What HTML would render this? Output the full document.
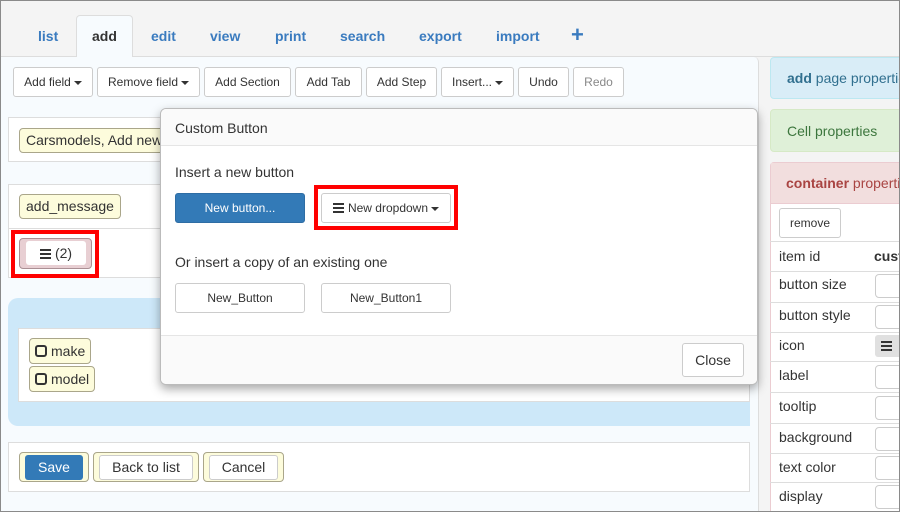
<!DOCTYPE html>
<html><head><meta charset="utf-8"><style>
*{box-sizing:border-box;margin:0;padding:0}
html,body{width:900px;height:512px;overflow:hidden}
body{background:#f4f4f4;font-family:"Liberation Sans",sans-serif;font-size:13px;color:#333;position:relative}
.a{position:absolute}
.frame{left:0;top:0;width:900px;height:512px;border:1px solid #8a8a8a;z-index:50;pointer-events:none}
.tab{top:28px;font-weight:bold;font-size:14px;color:#3a7bbf}
.btn{position:absolute;background:#fff;border:1px solid #ccc;border-radius:3px;font-size:12px;text-align:center;color:#333;white-space:nowrap}
.car{display:inline-block;width:0;height:0;border-left:4px solid transparent;border-right:4px solid transparent;border-top:4px solid #333;vertical-align:middle;margin-left:3px}
.panel{background:#fff;border:1px solid #ddd}
.tag{position:absolute;background:#fdfcdc;border:1px solid #aaa68a;border-radius:4px;font-size:14px;padding:0 6px;line-height:22px;white-space:nowrap}
.ham{display:inline-block;width:11px;height:10px;background:linear-gradient(#333 0 2px,transparent 2px 4px,#333 4px 6px,transparent 6px 8px,#333 8px 10px);vertical-align:-1px;margin-right:4px}
.sq{display:inline-block;width:12px;height:12px;border:2.5px solid #333;border-radius:3px;vertical-align:-1px;margin-right:4px}
.row{position:absolute;left:770px;width:130px;border-top:1px solid #ddd;font-size:14px;padding-left:9px;white-space:nowrap}
.inp{position:absolute;left:875px;width:30px;height:24px;border:1px solid #ccc;border-radius:4px;background:#fff}
</style></head><body>
<div class="a frame"></div>
<div class="a" style="left:0;top:56px;width:900px;height:1px;background:#ddd"></div>
<div class="a" style="left:76px;top:15px;width:57px;height:43px;background:#f7fbfe;border:1px solid #ddd;border-bottom:none;border-radius:4px 4px 0 0"></div>
<div class="a tab" style="left:38px">list</div>
<div class="a tab" style="left:92px;color:#333">add</div>
<div class="a tab" style="left:151px">edit</div>
<div class="a tab" style="left:210px">view</div>
<div class="a tab" style="left:275px">print</div>
<div class="a tab" style="left:340px">search</div>
<div class="a tab" style="left:419px">export</div>
<div class="a tab" style="left:496px">import</div>
<div class="a tab" style="left:571px;top:22px;font-size:22px">+</div>
<div class="a" style="left:0;top:57px;width:759px;height:455px;background:#f7fbfe;border-right:1px solid #ddd;border-radius:0 5px 0 0"></div>
<div class="btn" style="left:13px;top:67px;width:80px;height:30px;line-height:28px">Add field<span class="car"></span></div>
<div class="btn" style="left:97px;top:67px;width:103px;height:30px;line-height:28px">Remove field<span class="car"></span></div>
<div class="btn" style="left:204px;top:67px;width:87px;height:30px;line-height:28px">Add Section</div>
<div class="btn" style="left:295px;top:67px;width:67px;height:30px;line-height:28px">Add Tab</div>
<div class="btn" style="left:366px;top:67px;width:71px;height:30px;line-height:28px">Add Step</div>
<div class="btn" style="left:441px;top:67px;width:73px;height:30px;line-height:28px">Insert...<span class="car"></span></div>
<div class="btn" style="left:518px;top:67px;width:51px;height:30px;line-height:28px">Undo</div>
<div class="btn" style="left:573px;top:67px;width:51px;height:30px;line-height:28px;color:#888">Redo</div>

<div class="a panel" style="left:8px;top:117px;width:742px;height:45px"></div>
<div class="tag" style="left:19px;top:128px;height:25px">Carsmodels, Add new</div>
<div class="a panel" style="left:8px;top:184px;width:742px;height:94px"></div>
<div class="a" style="left:8px;top:228px;width:742px;height:1px;background:#ddd"></div>
<div class="tag" style="left:19px;top:194px;height:25px">add_message</div>
<div class="a" style="left:11px;top:230px;width:88px;height:48px;border:4px solid #f00"></div>
<div class="a" style="left:19px;top:238px;width:73px;height:31px;background:#e8cfd3;border:1px solid #aa8f94;border-radius:4px"></div>
<div class="a" style="left:26px;top:241px;width:60px;height:24px;background:#fff;border-radius:3px;text-align:center;font-size:14px;line-height:24px"><span class="ham"></span>(2)</div>

<div class="a" style="left:8px;top:298px;width:742px;height:128px;background:#cde8f9;border-radius:10px 0 0 10px"></div>
<div class="a" style="left:18px;top:328px;width:732px;height:74px;background:#fff;border:1px solid #ddd"></div>
<div class="tag" style="left:29px;top:338px;height:26px;padding:0 5px;line-height:24px"><span class="sq"></span>make</div>
<div class="tag" style="left:29px;top:366px;height:26px;padding:0 5px;line-height:24px"><span class="sq"></span>model</div>

<div class="a panel" style="left:8px;top:442px;width:742px;height:50px"></div>
<div class="a" style="left:19px;top:452px;width:70px;height:30px;background:#fdfcdc;border:1px solid #aaa68a;border-radius:4px"></div>
<div class="a" style="left:25px;top:455px;width:58px;height:25px;background:#337ab7;border-radius:3px;color:#fff;text-align:center;line-height:25px;font-size:14px">Save</div>
<div class="a" style="left:93px;top:452px;width:106px;height:30px;background:#fdfcdc;border:1px solid #aaa68a;border-radius:4px"></div>
<div class="a" style="left:99px;top:455px;width:94px;height:25px;background:#fff;border:1px solid #ccc;border-radius:3px;text-align:center;line-height:23px;font-size:14px">Back to list</div>
<div class="a" style="left:203px;top:452px;width:81px;height:30px;background:#fdfcdc;border:1px solid #aaa68a;border-radius:4px"></div>
<div class="a" style="left:209px;top:455px;width:69px;height:25px;background:#fff;border:1px solid #ccc;border-radius:3px;text-align:center;line-height:23px;font-size:14px">Cancel</div>

<div class="a" style="left:770px;top:57px;width:140px;height:42px;background:#d9edf7;border:1px solid #bce8f1;border-radius:4px;color:#31708f;font-size:14px;padding:12px 0 0 16px;white-space:nowrap"><b>add</b> page properties</div>
<div class="a" style="left:770px;top:109px;width:140px;height:43px;background:#dff0d8;border:1px solid #d6e9c6;border-radius:4px;color:#3c763d;font-size:14px;padding:13px 0 0 16px;white-space:nowrap">Cell properties</div>
<div class="a" style="left:770px;top:162px;width:140px;height:350px;background:#fff;border:1px solid #ebccd1;border-bottom:none;border-radius:4px 4px 0 0"></div>
<div class="a" style="left:771px;top:163px;width:139px;height:41px;background:#f2dede;border-bottom:1px solid #ebccd1;color:#a94442;font-size:14px;padding:12px 0 0 15px;white-space:nowrap"><b>container</b> properties</div>
<div class="btn" style="left:779px;top:208px;width:62px;height:30px;line-height:28px">remove</div>
<div class="row" style="top:241px;height:30px;line-height:28px">item id<b style="position:absolute;left:104px">cust</b></div>
<div class="row" style="top:271px;height:31px;line-height:24px">button size</div><div class="inp" style="top:274px"></div>
<div class="row" style="top:302px;height:30px;line-height:24px">button style</div><div class="inp" style="top:305px"></div>
<div class="row" style="top:332px;height:29px;line-height:24px">icon</div>
<div class="a" style="left:875px;top:335px;width:30px;height:22px;background:#e0e0e0;border-radius:3px;padding:6px 0 0 6px;line-height:10px"><span class="ham"></span></div>
<div class="row" style="top:361px;height:31px;line-height:26px">label</div><div class="inp" style="top:365px"></div>
<div class="row" style="top:392px;height:31px;line-height:26px">tooltip</div><div class="inp" style="top:396px"></div>
<div class="row" style="top:423px;height:30px;line-height:26px">background</div><div class="inp" style="top:427px"></div>
<div class="row" style="top:453px;height:29px;line-height:26px">text color</div><div class="inp" style="top:456px"></div>
<div class="row" style="top:482px;height:30px;line-height:26px">display</div><div class="inp" style="top:485px"></div>

<div class="a" style="left:160px;top:108px;width:598px;height:277px;background:#fff;border:1px solid #bbb;border-radius:6px;box-shadow:0 4px 10px rgba(0,0,0,.35);overflow:hidden;z-index:10">
 <div style="height:37px;background:#fafafa;border-bottom:1px solid #e5e5e5;font-size:14px;padding:11px 0 0 14px">Custom Button</div>
 <div class="a" style="left:14px;top:55px;font-size:14px">Insert a new button</div>
 <div class="a" style="left:14px;top:84px;width:130px;height:30px;background:#337ab7;border:1px solid #2e6da4;border-radius:3px;color:#fff;text-align:center;line-height:28px;font-size:12px">New button...</div>
 <div class="a" style="left:153px;top:76px;width:144px;height:45px;border:4px solid #f00"></div>
 <div class="btn" style="left:160px;top:84px;width:130px;height:30px;line-height:28px"><span class="ham"></span>New dropdown<span class="car"></span></div>
 <div class="a" style="left:14px;top:145px;font-size:14px">Or insert a copy of an existing one</div>
 <div class="btn" style="left:14px;top:174px;width:130px;height:30px;line-height:28px">New_Button</div>
 <div class="btn" style="left:160px;top:174px;width:130px;height:30px;line-height:28px">New_Button1</div>
 <div class="a" style="left:0;top:226px;width:598px;height:51px;background:#fafafa;border-top:1px solid #e5e5e5"></div>
 <div class="btn" style="left:521px;top:234px;width:62px;height:34px;line-height:32px;font-size:14px">Close</div>
</div>
</body></html>
